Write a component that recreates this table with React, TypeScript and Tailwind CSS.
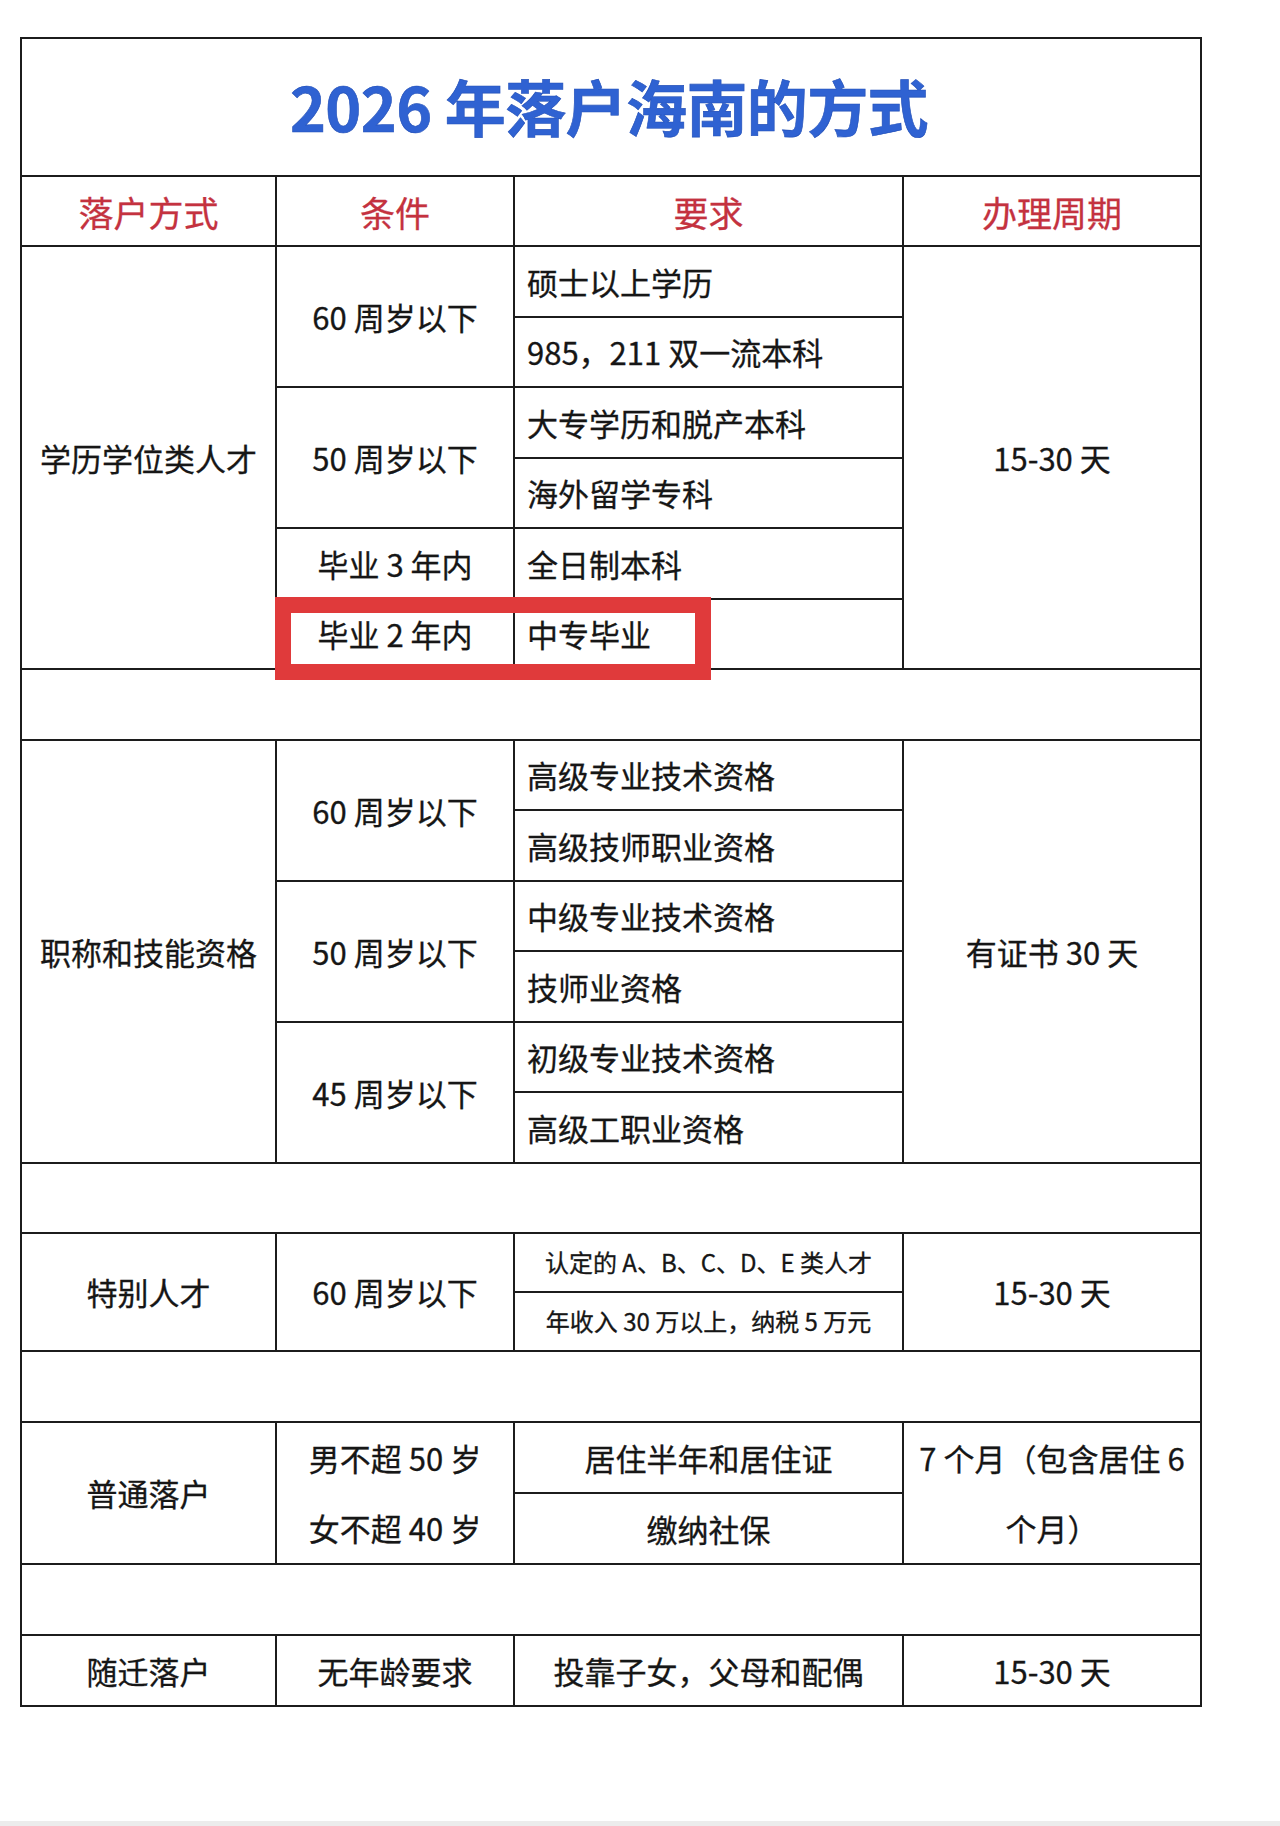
import React from 'react';

const FONT = "font-['Noto_Sans_CJK_SC','Noto_Sans_CJK_JP',sans-serif]";

// each cell draws its own right and bottom rule, the wrapper draws left and top
function Cell({
  children,
  className = '',
  left = false,
}: {
  children?: React.ReactNode;
  className?: string;
  left?: boolean;
}) {
  return (
    <div
      className={`border-r-2 border-b-2 border-[#1c1c1c] flex items-center ${
        left ? 'justify-start pl-[12px]' : 'justify-center text-center'
      } ${className}`}
    >
      {children}
    </div>
  );
}

export default function App() {
  return (
    <div className={`relative w-[1280px] h-[1826px] bg-white text-[#161616] ${FONT}`}>
      <div className="pt-[37px] pl-[20px]">
        <div
          className="grid w-[1182px] border-l-2 border-t-2 border-[#1c1c1c] text-[31px] leading-none [-webkit-text-stroke:0.3px_#161616]
            grid-cols-[255px_238px_389px_298px]
            grid-rows-[138px_70px_repeat(6,70.5px)_70.5px_repeat(6,70.5px)_70.5px_58.5px_59px_repeat(5,71px)]"
        >
          {/* Title */}
          <Cell className="col-span-4">
            <h1 className="text-[61px] font-bold text-[#2f62d2] tracking-[-0.6px] pr-[4px] pb-[4px] [-webkit-text-stroke:0.6px_#2350b8]">
              2026 年落户海南的方式
            </h1>
          </Cell>

          {/* Header */}
          {['落户方式', '条件', '要求', '办理周期'].map((h) => (
            <Cell key={h} className="text-[35px] text-[#c4323f] [-webkit-text-stroke:0.3px_#c4323f]">
              {h}
            </Cell>
          ))}

          {/* 学历学位类人才 */}
          <Cell className="row-span-6">学历学位类人才</Cell>
          <Cell className="row-span-2">60 周岁以下</Cell>
          <Cell left>硕士以上学历</Cell>
          <Cell className="row-span-6">15-30 天</Cell>
          <Cell left>985，211 双一流本科</Cell>
          <Cell className="row-span-2">50 周岁以下</Cell>
          <Cell left>大专学历和脱产本科</Cell>
          <Cell left>海外留学专科</Cell>
          <Cell>毕业 3 年内</Cell>
          <Cell left>全日制本科</Cell>
          <Cell>毕业 2 年内</Cell>
          <Cell left>中专毕业</Cell>

          <Cell className="col-span-4" />

          {/* 职称和技能资格 */}
          <Cell className="row-span-6">职称和技能资格</Cell>
          <Cell className="row-span-2">60 周岁以下</Cell>
          <Cell left>高级专业技术资格</Cell>
          <Cell className="row-span-6">有证书 30 天</Cell>
          <Cell left>高级技师职业资格</Cell>
          <Cell className="row-span-2">50 周岁以下</Cell>
          <Cell left>中级专业技术资格</Cell>
          <Cell left>技师业资格</Cell>
          <Cell className="row-span-2">45 周岁以下</Cell>
          <Cell left>初级专业技术资格</Cell>
          <Cell left>高级工职业资格</Cell>

          <Cell className="col-span-4" />

          {/* 特别人才 */}
          <Cell className="row-span-2">特别人才</Cell>
          <Cell className="row-span-2">60 周岁以下</Cell>
          <Cell className="text-[24px]">认定的 A、B、C、D、E 类人才</Cell>
          <Cell className="row-span-2">15-30 天</Cell>
          <Cell className="text-[24px]">年收入 30 万以上，纳税 5 万元</Cell>

          <Cell className="col-span-4" />

          {/* 普通落户 */}
          <Cell className="row-span-2">普通落户</Cell>
          <Cell className="row-span-2 flex-col !justify-around">
            <span>男不超 50 岁</span>
            <span>女不超 40 岁</span>
          </Cell>
          <Cell>居住半年和居住证</Cell>
          <Cell className="row-span-2 flex-col !justify-around">
            <span>7 个月（包含居住 6</span>
            <span>个月）</span>
          </Cell>
          <Cell>缴纳社保</Cell>

          <Cell className="col-span-4" />

          {/* 随迁落户 */}
          <Cell>随迁落户</Cell>
          <Cell>无年龄要求</Cell>
          <Cell>投靠子女，父母和配偶</Cell>
          <Cell>15-30 天</Cell>
        </div>
      </div>

      {/* red annotation box */}
      <div className="absolute left-[275px] top-[597px] w-[436px] h-[83px] border-[16px] border-[#e03a3b]" />

      <div className="absolute bottom-0 left-0 w-full h-[5px] bg-[#ececec]" />
    </div>
  );
}
